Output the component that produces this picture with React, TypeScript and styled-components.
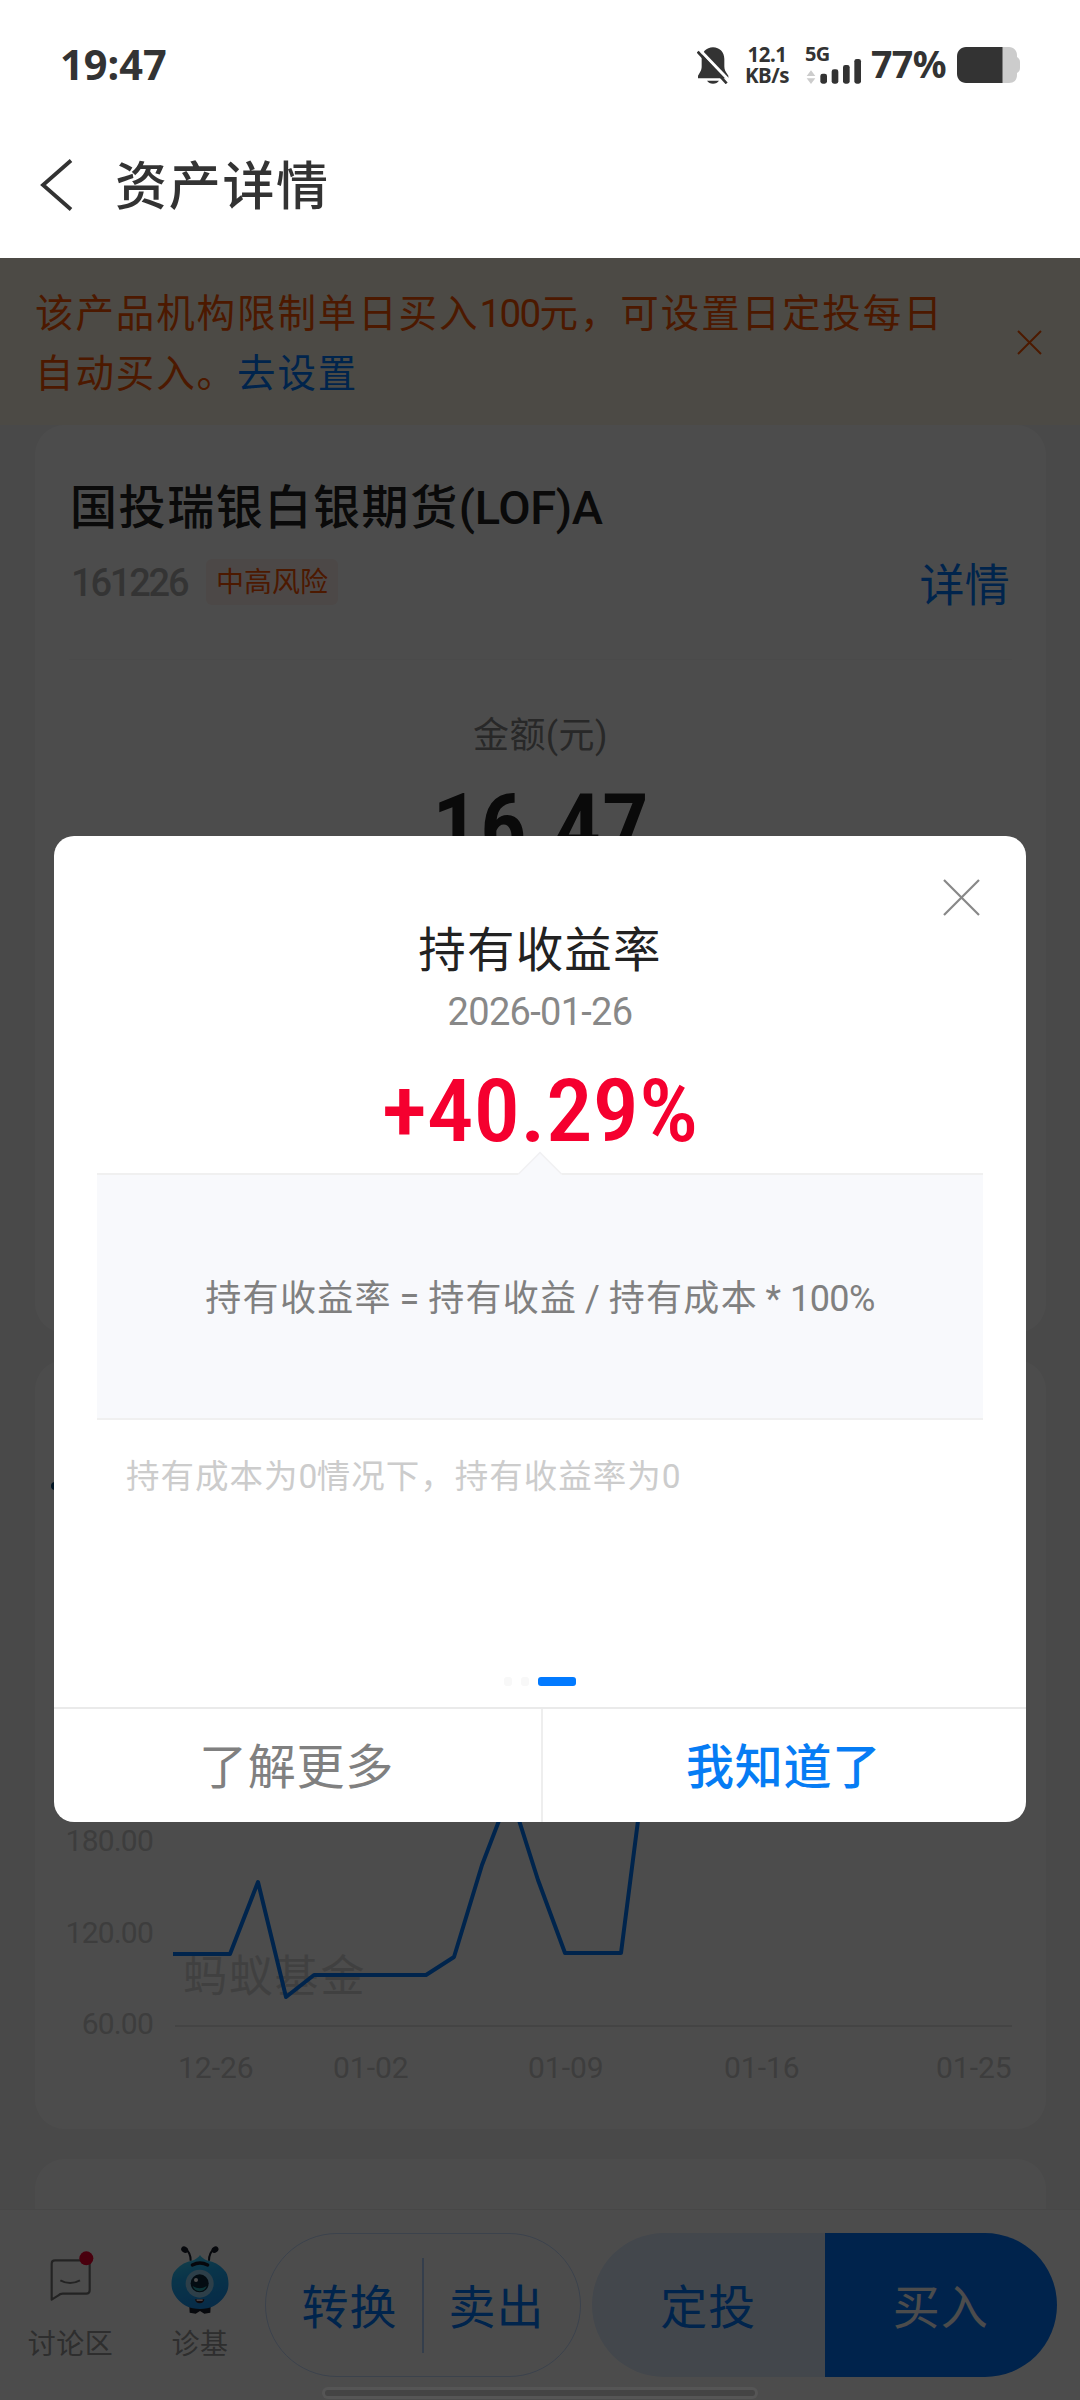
import React from "react";
import styled, { createGlobalStyle } from "styled-components";

const GlobalStyle = createGlobalStyle`
  * { box-sizing: border-box; }
  body {
    margin: 0;
    background: #fff;
    font-family: Roboto, "Noto Sans CJK SC", sans-serif;
  }
`;

const Screen = styled.div`
  position: relative;
  width: 1080px;
  height: 2400px;
  overflow: hidden;
  display: flex;
  flex-direction: column;
  background: #f5f5f5;
`;

/* ---------- header ---------- */

const Header = styled.header`
  height: 258px;
  flex: none;
  background: #fff;
  color: #333;
`;

const StatusBar = styled.div`
  height: 112px;
  padding: 18px 60px 0 60px;
  display: flex;
  align-items: center;
  justify-content: space-between;
  font-family: "Noto Sans", sans-serif;
  font-weight: 700;
`;

const Clock = styled.div`
  margin-top: -2px;
  font-size: 41.5px;
  line-height: 50px;
`;

const StatusIcons = styled.div`
  display: flex;
  align-items: center;
`;

const NetSpeed = styled.div`
  width: 44px;
  margin-left: 16px;
  font-size: 20.5px;
  line-height: 21px;
  text-align: center;
  letter-spacing: -0.5px;
`;

const Signal = styled.div`
  position: relative;
  width: 56px;
  height: 38px;
  margin-left: 17px;
`;

const SignalLabel = styled.span`
  position: absolute;
  left: -1px;
  top: -4px;
  font-size: 20px;
  line-height: 24px;
  letter-spacing: -0.8px;
`;

const BatteryText = styled.div`
  width: 74px;
  margin: -2px 12px 0 9px;
  font-size: 37.5px;
  line-height: 44px;
  letter-spacing: -0.6px;
`;

const NavBar = styled.div`
  height: 146px;
  padding-left: 38px;
  display: flex;
  align-items: center;
`;

const NavTitle = styled.h1`
  margin: 6px 0 0 41px;
  font-size: 52px;
  line-height: 60px;
  font-weight: 500;
  letter-spacing: 1.7px;
`;

/* ---------- notice ---------- */

const Notice = styled.div`
  height: 167px;
  flex: none;
  padding: 26px 38px 0 35px;
  display: flex;
  justify-content: space-between;
  background: #fff9e6;
  color: #ff5500;
`;

const NoticeText = styled.p`
  width: 930px;
  margin: 0;
  font-size: 38.5px;
  line-height: 60px;
  letter-spacing: 1.9px;
`;

const Digits = styled.span`
  letter-spacing: -0.6px;
`;

const NoticeDigits = styled.span`
  letter-spacing: -1.6px;
`;

const Link = styled.a`
  color: #027aff;
`;

const NoticeClose = styled.div`
  margin-top: 46px;
`;

/* ---------- cards ---------- */

const Content = styled.main`
  flex: 1;
  min-height: 0;
  overflow: hidden;
  padding: 0 34px 0 35px;
`;

const Card = styled.section<{ $height: number; $gap?: number }>`
  height: ${(p) => p.$height}px;
  margin-top: ${(p) => p.$gap ?? 0}px;
  border-radius: 30px;
  background: #fff;
  display: flex;
  flex-direction: column;
`;

const FundName = styled.h2`
  margin: 53px 0 0 35px;
  font-size: 47px;
  line-height: 60px;
  font-weight: 500;
  letter-spacing: 1.6px;
  color: #222;
`;

const FundClass = styled.span`
  letter-spacing: -0.4px;
`;

const FundRow = styled.div`
  height: 46px;
  margin: 21px 36px 0 36px;
  display: flex;
  align-items: center;
`;

const FundCode = styled.span`
  width: 118px;
  padding-top: 1px;
  font-size: 38px;
  font-weight: 500;
  letter-spacing: -2.2px;
  color: #b0b0b0;
`;

const RiskTag = styled.span`
  height: 46px;
  width: 132px;
  margin-left: 17px;
  border-radius: 6px;
  background: #fff0ed;
  color: #ff5500;
  font-size: 28px;
  line-height: 48px;
  text-align: center;
`;

const DetailLink = styled(Link)`
  margin-left: auto;
  font-size: 45px;
  letter-spacing: 0.3px;
`;

const CardRule = styled.div`
  height: 1px;
  margin: 54px 34px 0;
  background: #f9f9f9;
`;

const AmountLabel = styled.div`
  margin-top: 56px;
  text-align: center;
  font-size: 36px;
  line-height: 40px;
  letter-spacing: 0.4px;
  color: #888;
`;

const BigNumber = styled.div<{ $stretch: number }>`
  text-align: center;
  font-family: "Roboto Condensed", Roboto, sans-serif;
  transform: scaleX(${(p) => p.$stretch});
`;

const Amount = styled(BigNumber)`
  margin-top: 22px;
  font-size: 90px;
  line-height: 100px;
  font-weight: 600;
  color: #222;
`;

const ChartCard = styled(Card)`
  position: relative;
  justify-content: flex-end;
  padding-bottom: 41px;
`;

const LegendDot = styled.i`
  position: absolute;
  left: 16px;
  top: 122px;
  width: 8px;
  height: 8px;
  border-radius: 50%;
  background: #0a4a7a;
`;

const PlotRow = styled.div`
  position: relative;
  display: flex;
  align-items: flex-end;
`;

const YAxis = styled.div`
  width: 118px;
  height: 223px;
  display: flex;
  flex-direction: column;
  justify-content: space-between;
  text-align: right;
  font-size: 30px;
  line-height: 40px;
  letter-spacing: -0.8px;
  color: #ccc;
`;

const Watermark = styled.div`
  position: absolute;
  left: 148px;
  top: 152px;
  font-size: 44px;
  line-height: 60px;
  letter-spacing: 1.8px;
  color: #d8d8d8;
`;

const Plot = styled.svg`
  position: relative;
  display: block;
`;

const XAxis = styled.div`
  margin-top: 4px;
  padding-left: 142px;
  display: flex;
  font-size: 30px;
  line-height: 40px;
  color: #ccc;
`;

const XTick = styled.span<{ $before: number }>`
  width: 77px;
  margin-left: ${(p) => p.$before}px;
  white-space: nowrap;
`;

/* ---------- bottom bar ---------- */

const BottomBar = styled.footer`
  position: relative;
  height: 191px;
  flex: none;
  padding-top: 23px;
  border-top: 1px solid #eee;
  background: #fff;
  display: flex;
  align-items: flex-start;
`;

const Tab = styled.div<{ $width: number }>`
  width: ${(p) => p.$width}px;
  height: 144px;
  display: flex;
  flex-direction: column;
  align-items: center;
  justify-content: space-between;
  font-size: 28px;
  line-height: 40px;
  letter-spacing: 0.5px;
  color: #999;
  padding: 11px 0 12px;
`;

const ChatIconBox = styled.div`
  padding: 7px 0 0 3px;
`;

const OutlinePill = styled.div`
  width: 316px;
  height: 144px;
  margin-left: 6px;
  padding: 0 11px;
  border: 1px solid #c5dcff;
  border-radius: 72px;
  display: flex;
  align-items: center;
`;

const SolidPill = styled.div`
  width: 465px;
  height: 144px;
  margin-left: 11px;
  border-radius: 72px;
  overflow: hidden;
  display: flex;
`;

const Action = styled.button<{ $bg?: string; $fg?: string }>`
  flex: 1;
  height: 100%;
  padding: 0 0 3px;
  border: 0;
  background: ${(p) => p.$bg ?? "transparent"};
  color: ${(p) => p.$fg ?? "#027aff"};
  font: 400 47px/60px "Noto Sans CJK SC", sans-serif;
  letter-spacing: 1px;
`;

const PillDivider = styled.div`
  width: 2px;
  height: 95px;
  background: #b0d0ff;
`;

const GestureBar = styled.div`
  position: absolute;
  left: 322px;
  bottom: 1px;
  width: 436px;
  height: 12px;
  border: 3px solid rgba(255, 255, 255, 0.05);
  border-radius: 6px;
  background: #444;
  background-clip: padding-box;
  z-index: 3;
`;

/* ---------- dialog ---------- */

const Mask = styled.div`
  position: absolute;
  left: 0;
  right: 0;
  top: 258px;
  bottom: 0;
  padding-top: 578px;
  background: rgba(0, 0, 0, 0.7);
  z-index: 2;
`;

const Dialog = styled.div`
  position: relative;
  width: 972px;
  height: 986px;
  margin: 0 auto;
  padding-top: 84px;
  border-radius: 20px;
  background: #fff;
  display: flex;
  flex-direction: column;
  text-align: center;
`;

const DialogClose = styled.div`
  position: absolute;
  right: 46px;
  top: 43px;
`;

const DialogTitle = styled.h3`
  margin: 0;
  font-size: 47.5px;
  line-height: 62px;
  font-weight: 400;
  letter-spacing: 1.2px;
  color: #222;
`;

const DialogDate = styled.div`
  margin-top: 9px;
  font-size: 38px;
  line-height: 42px;
  font-weight: 400;
  letter-spacing: -0.7px;
  color: #888;
`;

const Rate = styled(BigNumber)`
  margin-top: 33px;
  height: 91px;
  font-size: 87px;
  line-height: 90px;
  font-weight: 500;
  color: #f5002f;
`;

const FormulaBox = styled.div`
  position: relative;
  height: 247px;
  margin: 16px 43px 0;
  padding-bottom: 3px;
  border-top: 2px solid #f0f0f0;
  border-bottom: 2px solid #f0f0f0;
  background: #f8f9fc;
  display: flex;
  align-items: center;
  justify-content: center;
  font-size: 36px;
  letter-spacing: 1.3px;
  word-spacing: -2.6px;
  color: #808080;
`;

const FormulaArrow = styled.svg`
  position: absolute;
  left: 421px;
  top: -24px;
`;

const Remark = styled.div`
  margin: 35px 0 0 72px;
  text-align: left;
  font-size: 33.5px;
  line-height: 44px;
  letter-spacing: 1px;
  color: #ccc;
`;

const Dots = styled.div`
  margin-top: auto;
  height: 9px;
  display: flex;
  justify-content: center;
  gap: 9px;
`;

const Dot = styled.i<{ $active?: boolean }>`
  width: ${(p) => (p.$active ? 38 : 8)}px;
  height: 9px;
  border-radius: 3px;
  background: ${(p) => (p.$active ? "#027aff" : "#f8f8f8")};
`;

const DialogFooter = styled.div`
  height: 115px;
  margin-top: 21px;
  flex: none;
  border-top: 2px solid #eaeaea;
  display: flex;
`;

const FooterButton = styled.button<{ $primary?: boolean }>`
  flex: ${(p) => (p.$primary ? "1" : "0 0 489px")};
  padding: 0 2px 6px 0;
  border: 0;
  border-right: ${(p) => (p.$primary ? "0" : "2px solid #eee")};
  background: none;
  color: ${(p) => (p.$primary ? "#067cf4" : "#808080")};
  font: ${(p) => (p.$primary ? 500 : 400)} 48px/60px "Noto Sans CJK SC", sans-serif;
  letter-spacing: 0.7px;
`;

/* ---------- icons ---------- */

const Cross = ({ size, color, width }: { size: number; color: string; width: number }) => (
  <svg width={size} height={size} viewBox={`0 0 ${size} ${size}`} fill="none" stroke={color} strokeWidth={width} display="block">
    <path d={`M1 1 L${size - 1} ${size - 1} M${size - 1} 1 L1 ${size - 1}`} />
  </svg>
);

const BellOff = () => (
  <svg width="32" height="37" viewBox="112 76 96 111" fill="#333">
    <path d="M160 77c20 0 34 15 34 35v22c0 10 3 16 9 24l3 4v8H115v-8l6-10c4-7 5-11 5-18v-22c0-20 14-35 34-35z" />
    <path d="M142 177h36c-4 6-10 9-18 9s-14-3-18-9z" />
    <path d="M120 84 L210 178" stroke="#fff" strokeWidth="9" />
    <path d="M114 90 L201 185" stroke="#333" strokeWidth="8" />
  </svg>
);

const SignalBars = () => (
  <svg width="56" height="38" viewBox="436 73 168 114" fill="#333">
    <path d="M451 146l13 17h-26zM451 187l-13-17h26z" fill="#ccc" />
    <rect x="479" y="156" width="20" height="30" rx="7" />
    <rect x="513" y="143" width="20" height="43" rx="7" />
    <rect x="547" y="130" width="20" height="56" rx="7" />
    <rect x="581" y="112" width="20" height="74" rx="7" />
  </svg>
);

const Battery = () => (
  <svg width="63" height="36" viewBox="0 0 63 36">
    <path d="M45 0h7c5 0 8 4 8 8v2c2 1 3 3 3 5v6c0 2-1 4-3 5v2c0 5-3 8-8 8h-7z" fill="#ccc" />
    <path d="M9 0h36.500v36H9c-5 0-9-4-9-9V9c0-5 4-9 9-9z" fill="#333" />
  </svg>
);

const BackArrow = () => (
  <svg width="36" height="52" viewBox="0 0 36 52" fill="none" stroke="#333" strokeWidth="3.800">
    <path d="M33 1.500 L5 26 L33 50.500" />
  </svg>
);

const ChatIcon = () => (
  <svg width="44" height="50" viewBox="90 68 132 150" fill="none" stroke="#777" strokeWidth="6.500">
    <path d="M105 96H199q10 0 10 10V186q0 10-10 10H128q-8 0-14 6L95 214V106q0-10 10-10z" strokeLinejoin="round" />
    <path d="M121 156q29 16 59 0" />
    <circle cx="199" cy="90" r="21" fill="#f5002f" stroke="none" />
  </svg>
);

const AntMascot = () => (
  <svg width="62" height="71" viewBox="449 44 186 213">
    <defs>
      <linearGradient id="body" x1="0" y1="0" x2="0.300" y2="1">
        <stop offset="0" stopColor="#48dcf8" />
        <stop offset="0.450" stopColor="#20b0f8" />
        <stop offset="1" stopColor="#1894f0" />
      </linearGradient>
    </defs>
    <path d="M514 94q0-24-14-33M569 94q0-24 14-33" fill="none" stroke="#1a1f2c" strokeWidth="6" />
    <ellipse cx="496" cy="61" rx="11" ry="9" transform="rotate(35 496 61)" fill="#1a1f2c" />
    <ellipse cx="587" cy="61" rx="11" ry="9" transform="rotate(-35 587 61)" fill="#1a1f2c" />
    <path d="M510 230l32 6 32-6-1 20-18 3-13-8-13 8-18-3z" fill="#1a1f2c" />
    <path d="M542 77c8 12 20 17 36 20 18 6 32 18 42 32 8 14 10 40 4 56-8 20-24 36-42 46-22 11-58 11-80 0-18-10-34-26-42-46-6-16-4-42 4-56 10-14 24-26 42-32 16-3 28-8 36-20z" fill="url(#body)" />
    <path d="M519 107q23-12 46 0" fill="none" stroke="#141a28" strokeWidth="10" strokeLinecap="round" />
    <circle cx="541" cy="163" r="42" fill="#98d4f4" />
    <circle cx="541" cy="162" r="27" fill="#0d2a3c" />
    <path d="M520 170a22 22 0 0 0 42 0q-21 14-42 0z" fill="#28b0b8" />
    <circle cx="530" cy="152" r="6" fill="#fff" />
    <path d="M527 210h28q-2 12-14 12t-14-12z" fill="#3a2028" />
    <path d="M532 210h18v5h-18z" fill="#f0d8d8" />
  </svg>
);

/* ---------- data ---------- */

const yTicks = ["180.00", "120.00", "60.00"];
const xTicks = [
  { label: "12-26", before: 1 },
  { label: "01-02", before: 78 },
  { label: "01-09", before: 118 },
  { label: "01-16", before: 119 },
  { label: "01-25", before: 135 },
];
const line = "20,159 77,159 105,87 133,202 161,180 273,180 301,162 329,70 357,-3 385,85 412,158 468,158 496,-60";

export default function App() {
  return (
    <>
      <GlobalStyle />
      <Screen>
        <Header>
          <StatusBar>
            <Clock>19:47</Clock>
            <StatusIcons>
              <BellOff />
              <NetSpeed>
                12.1
                <br />
                KB/s
              </NetSpeed>
              <Signal>
                <SignalBars />
                <SignalLabel>5G</SignalLabel>
              </Signal>
              <BatteryText>77%</BatteryText>
              <Battery />
            </StatusIcons>
          </StatusBar>
          <NavBar>
            <BackArrow />
            <NavTitle>资产详情</NavTitle>
          </NavBar>
        </Header>

        <Notice>
          <NoticeText>
            该产品机构限制单日买入<NoticeDigits>100</NoticeDigits>元，可设置日定投每日
            <br />
            自动买入。<Link>去设置</Link>
          </NoticeText>
          <NoticeClose>
            <Cross size={25} color="#ff5500" width={2} />
          </NoticeClose>
        </Notice>

        <Content>
          <Card $height={908}>
            <FundName>
              国投瑞银白银期货<FundClass>(LOF)A</FundClass>
            </FundName>
            <FundRow>
              <FundCode>161226</FundCode>
              <RiskTag>中高风险</RiskTag>
              <DetailLink>详情</DetailLink>
            </FundRow>
            <CardRule />
            <AmountLabel>金额(元)</AmountLabel>
            <Amount $stretch={1.05}>16.47</Amount>
          </Card>

          <ChartCard $height={769} $gap={27}>
            <LegendDot />
            <PlotRow>
              <YAxis>
                {yTicks.map((t) => (
                  <span key={t}>{t}</span>
                ))}
              </YAxis>
              <Watermark>蚂蚁基金</Watermark>
              <Plot width="893" height="249" viewBox="0 0 893 249" fill="none">
                <path d="M22 231H859" stroke="#e4e4e4" strokeWidth="2" />
                <polyline points={line} stroke="#027aff" strokeWidth="4" strokeLinejoin="round" />
              </Plot>
            </PlotRow>
            <XAxis>
              {xTicks.map((t) => (
                <XTick key={t.label} $before={t.before}>
                  {t.label}
                </XTick>
              ))}
            </XAxis>
          </ChartCard>

          <Card $height={200} $gap={30} />
        </Content>

        <BottomBar>
          <Tab $width={141}>
            <ChatIconBox>
              <ChatIcon />
            </ChatIconBox>
            讨论区
          </Tab>
          <Tab $width={118}>
            <AntMascot />
            诊基
          </Tab>
          <OutlinePill>
            <Action>转换</Action>
            <PillDivider />
            <Action>卖出</Action>
          </OutlinePill>
          <SolidPill>
            <Action $bg="#e0edff">定投</Action>
            <Action $bg="#0277ff" $fg="#fff">
              买入
            </Action>
          </SolidPill>
        </BottomBar>

        <Mask>
          <Dialog>
            <DialogClose>
              <Cross size={37} color="#888" width={2.2} />
            </DialogClose>
            <DialogTitle>持有收益率</DialogTitle>
            <DialogDate>2026-01-26</DialogDate>
            <Rate $stretch={1.07}>+40.29%</Rate>
            <FormulaBox>
              <FormulaArrow width="44" height="26" viewBox="0 0 44 26">
                <path d="M0 26 L0.500 23 L22 1.500 L43.500 23 L44 26z" fill="#f8f9fc" />
                <path d="M0.500 23 L22 1.500 L43.500 23" fill="none" stroke="#f0f0f2" strokeWidth="1.500" />
              </FormulaArrow>
              <span>
                持有收益率 = 持有收益 / 持有成本 * <Digits>100%</Digits>
              </span>
            </FormulaBox>
            <Remark>
              持有成本为<Digits>0</Digits>情况下，持有收益率为0
            </Remark>
            <Dots>
              <Dot />
              <Dot />
              <Dot $active />
            </Dots>
            <DialogFooter>
              <FooterButton>了解更多</FooterButton>
              <FooterButton $primary>我知道了</FooterButton>
            </DialogFooter>
          </Dialog>
        </Mask>
        <GestureBar />
      </Screen>
    </>
  );
}
